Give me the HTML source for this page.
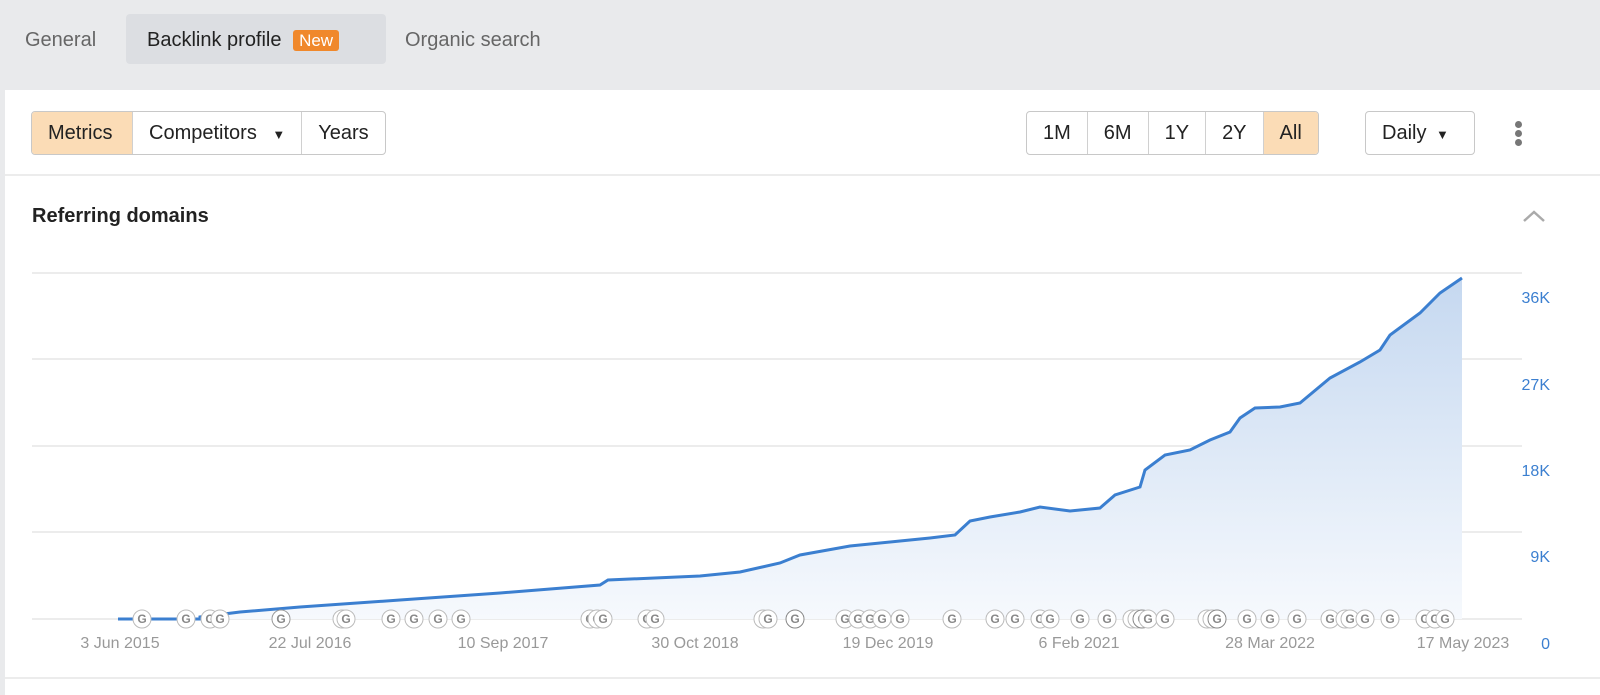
<!DOCTYPE html>
<html><head><style>
body{margin:0;width:1600px;height:695px;background:#e9eaec;font-family:"Liberation Sans",sans-serif;overflow:hidden;position:relative}
.tab{position:absolute;top:14px;height:50px;line-height:52px;font-size:20px;color:#666}
.card{position:absolute;left:5px;top:90px;width:1595px;height:605px;background:#fff}
.btn{position:absolute;top:111px;height:42px;border:1px solid #c8c8c8;border-radius:4px;display:flex;overflow:hidden;font-size:20px;color:#222}
.btn div{padding:0 16px;line-height:42px;border-left:1px solid #d0d0d0}
.btn div:first-child{border-left:none}
.on{background:#fbdcb6}
.yl{position:absolute;right:50px;font-size:16px;color:#3b7fd0}
.xl{position:absolute;top:635px;font-size:16px;color:#999;transform:translateX(-50%)}
</style></head><body>
<div class="tab" style="left:25px">General</div>
<div class="tab" style="left:126px;width:260px;background:#dcdee2;border-radius:4px;color:#222"><span style="margin-left:21px">Backlink profile</span> <span style="background:#f0882b;color:#fff;font-size:17px;padding:1px 6px;border-radius:3px;margin-left:6px">New</span></div>
<div class="tab" style="left:405px">Organic search</div>
<div class="card"></div>
<div class="btn" style="left:31px"><div class="on" style="width:68px">Metrics</div><div>Competitors <span style="font-size:13px;margin-left:10px">▼</span></div><div>Years</div></div>
<div class="btn" style="left:1026px"><div>1M</div><div>6M</div><div>1Y</div><div>2Y</div><div class="on">All</div></div>
<div class="btn" style="left:1365px;width:108px"><div>Daily <span style="font-size:13px;margin-left:4px">▼</span></div></div>
<div style="position:absolute;left:1515px;top:121px;width:7px"><div style="width:7px;height:7px;border-radius:50%;background:#777;margin-bottom:2px"></div><div style="width:7px;height:7px;border-radius:50%;background:#777;margin-bottom:2px"></div><div style="width:7px;height:7px;border-radius:50%;background:#777"></div></div>
<div style="position:absolute;left:5px;top:174px;width:1595px;height:2px;background:#ececec"></div>
<div style="position:absolute;left:32px;top:205px;font-size:20px;font-weight:bold;color:#222">Referring domains</div>
<svg style="position:absolute;left:1521px;top:208px" width="26" height="16"><path d="M3 13 L13 4 L23 13" stroke="#aaa" stroke-width="2.5" fill="none"/></svg>
<svg style="position:absolute;left:0;top:0" width="1600" height="695">
<defs><linearGradient id="g" x1="0" y1="0" x2="0" y2="1"><stop offset="0" stop-color="#c5d8f0"/><stop offset="1" stop-color="#f6f9fd"/></linearGradient></defs>
<g stroke="#e6e6e6" stroke-width="1.5"><line x1="32" y1="273" x2="1522" y2="273"/><line x1="32" y1="359" x2="1522" y2="359"/><line x1="32" y1="446" x2="1522" y2="446"/><line x1="32" y1="532" x2="1522" y2="532"/><line x1="32" y1="619" x2="1522" y2="619"/></g>
<path d="M200,617 L240,612 L300,607 L400,600 L500,593 L600,585 L608,580 L700,576 L740,572 L780,563 L800,555 L850,546 L900,541 L930,538 L955,535 L970,521 L990,517 L1020,512 L1040,507 L1070,511 L1100,508 L1115,495 L1140,487 L1145,470 L1165,455 L1190,450 L1210,440 L1230,432 L1240,418 L1255,408 L1280,407 L1300,403 L1330,378 L1360,362 L1380,350 L1390,335 L1420,313 L1440,293 L1462,278 L1462,619 L200,619Z" fill="url(#g)"/>
<path d="M118,619 L200,619 L200,617 L240,612 L300,607 L400,600 L500,593 L600,585 L608,580 L700,576 L740,572 L780,563 L800,555 L850,546 L900,541 L930,538 L955,535 L970,521 L990,517 L1020,512 L1040,507 L1070,511 L1100,508 L1115,495 L1140,487 L1145,470 L1165,455 L1190,450 L1210,440 L1230,432 L1240,418 L1255,408 L1280,407 L1300,403 L1330,378 L1360,362 L1380,350 L1390,335 L1420,313 L1440,293 L1462,278" fill="none" stroke="#3b7fd0" stroke-width="3"/>
<g font-family="Liberation Sans" font-size="12" font-weight="bold" fill="#888" text-anchor="middle">
<script>/*none*/</script>
</g>
<g id="gs" font-family="Liberation Sans" font-size="12" font-weight="bold" text-anchor="middle">
<g transform="translate(142,619)"><circle r="9" fill="#fff" stroke="#bbb"/><text y="4" fill="#888">G</text></g>
<g transform="translate(186,619)"><circle r="9" fill="#fff" stroke="#bbb"/><text y="4" fill="#888">G</text></g>
<g transform="translate(210,619)"><circle r="9" fill="#fff" stroke="#bbb"/><text y="4" fill="#888">G</text></g>
<g transform="translate(220,619)"><circle r="9" fill="#fff" stroke="#bbb"/><text y="4" fill="#888">G</text></g>
<g transform="translate(281,619)"><circle r="9" fill="#fff" stroke="#999"/><text y="4" fill="#888">G</text></g>
<g transform="translate(342,619)"><circle r="9" fill="#fff" stroke="#bbb"/><text y="4" fill="#888">G</text></g>
<g transform="translate(346,619)"><circle r="9" fill="#fff" stroke="#bbb"/><text y="4" fill="#888">G</text></g>
<g transform="translate(391,619)"><circle r="9" fill="#fff" stroke="#bbb"/><text y="4" fill="#888">G</text></g>
<g transform="translate(414,619)"><circle r="9" fill="#fff" stroke="#bbb"/><text y="4" fill="#888">G</text></g>
<g transform="translate(438,619)"><circle r="9" fill="#fff" stroke="#bbb"/><text y="4" fill="#888">G</text></g>
<g transform="translate(461,619)"><circle r="9" fill="#fff" stroke="#bbb"/><text y="4" fill="#888">G</text></g>
<g transform="translate(590,619)"><circle r="9" fill="#fff" stroke="#bbb"/><text y="4" fill="#888">G</text></g>
<g transform="translate(597,619)"><circle r="9" fill="#fff" stroke="#bbb"/><text y="4" fill="#888">G</text></g>
<g transform="translate(603,619)"><circle r="9" fill="#fff" stroke="#bbb"/><text y="4" fill="#888">G</text></g>
<g transform="translate(647,619)"><circle r="9" fill="#fff" stroke="#bbb"/><text y="4" fill="#888">G</text></g>
<g transform="translate(655,619)"><circle r="9" fill="#fff" stroke="#bbb"/><text y="4" fill="#888">G</text></g>
<g transform="translate(763,619)"><circle r="9" fill="#fff" stroke="#bbb"/><text y="4" fill="#888">G</text></g>
<g transform="translate(768,619)"><circle r="9" fill="#fff" stroke="#bbb"/><text y="4" fill="#888">G</text></g>
<g transform="translate(795,619)"><circle r="9" fill="#fff" stroke="#888"/><text y="4" fill="#888">G</text></g>
<g transform="translate(845,619)"><circle r="9" fill="#fff" stroke="#bbb"/><text y="4" fill="#888">G</text></g>
<g transform="translate(858,619)"><circle r="9" fill="#fff" stroke="#bbb"/><text y="4" fill="#888">G</text></g>
<g transform="translate(870,619)"><circle r="9" fill="#fff" stroke="#bbb"/><text y="4" fill="#888">G</text></g>
<g transform="translate(882,619)"><circle r="9" fill="#fff" stroke="#bbb"/><text y="4" fill="#888">G</text></g>
<g transform="translate(900,619)"><circle r="9" fill="#fff" stroke="#bbb"/><text y="4" fill="#888">G</text></g>
<g transform="translate(952,619)"><circle r="9" fill="#fff" stroke="#bbb"/><text y="4" fill="#888">G</text></g>
<g transform="translate(995,619)"><circle r="9" fill="#fff" stroke="#bbb"/><text y="4" fill="#888">G</text></g>
<g transform="translate(1015,619)"><circle r="9" fill="#fff" stroke="#bbb"/><text y="4" fill="#888">G</text></g>
<g transform="translate(1040,619)"><circle r="9" fill="#fff" stroke="#bbb"/><text y="4" fill="#888">G</text></g>
<g transform="translate(1050,619)"><circle r="9" fill="#fff" stroke="#bbb"/><text y="4" fill="#888">G</text></g>
<g transform="translate(1080,619)"><circle r="9" fill="#fff" stroke="#bbb"/><text y="4" fill="#888">G</text></g>
<g transform="translate(1107,619)"><circle r="9" fill="#fff" stroke="#bbb"/><text y="4" fill="#888">G</text></g>
<g transform="translate(1132,619)"><circle r="9" fill="#fff" stroke="#bbb"/><text y="4" fill="#888">G</text></g>
<g transform="translate(1137,619)"><circle r="9" fill="#fff" stroke="#bbb"/><text y="4" fill="#888">G</text></g>
<g transform="translate(1142,619)"><circle r="9" fill="#fff" stroke="#888"/><text y="4" fill="#888">G</text></g>
<g transform="translate(1148,619)"><circle r="9" fill="#fff" stroke="#bbb"/><text y="4" fill="#888">G</text></g>
<g transform="translate(1165,619)"><circle r="9" fill="#fff" stroke="#bbb"/><text y="4" fill="#888">G</text></g>
<g transform="translate(1207,619)"><circle r="9" fill="#fff" stroke="#bbb"/><text y="4" fill="#888">G</text></g>
<g transform="translate(1212,619)"><circle r="9" fill="#fff" stroke="#bbb"/><text y="4" fill="#888">G</text></g>
<g transform="translate(1217,619)"><circle r="9" fill="#fff" stroke="#888"/><text y="4" fill="#888">G</text></g>
<g transform="translate(1247,619)"><circle r="9" fill="#fff" stroke="#bbb"/><text y="4" fill="#888">G</text></g>
<g transform="translate(1270,619)"><circle r="9" fill="#fff" stroke="#bbb"/><text y="4" fill="#888">G</text></g>
<g transform="translate(1297,619)"><circle r="9" fill="#fff" stroke="#bbb"/><text y="4" fill="#888">G</text></g>
<g transform="translate(1330,619)"><circle r="9" fill="#fff" stroke="#bbb"/><text y="4" fill="#888">G</text></g>
<g transform="translate(1345,619)"><circle r="9" fill="#fff" stroke="#bbb"/><text y="4" fill="#888">G</text></g>
<g transform="translate(1350,619)"><circle r="9" fill="#fff" stroke="#bbb"/><text y="4" fill="#888">G</text></g>
<g transform="translate(1365,619)"><circle r="9" fill="#fff" stroke="#bbb"/><text y="4" fill="#888">G</text></g>
<g transform="translate(1390,619)"><circle r="9" fill="#fff" stroke="#bbb"/><text y="4" fill="#888">G</text></g>
<g transform="translate(1425,619)"><circle r="9" fill="#fff" stroke="#bbb"/><text y="4" fill="#888">G</text></g>
<g transform="translate(1435,619)"><circle r="9" fill="#fff" stroke="#bbb"/><text y="4" fill="#888">G</text></g>
<g transform="translate(1445,619)"><circle r="9" fill="#fff" stroke="#bbb"/><text y="4" fill="#888">G</text></g>
</g>
</svg>
<div class="yl" style="top:290px">36K</div>
<div class="yl" style="top:377px">27K</div>
<div class="yl" style="top:463px">18K</div>
<div class="yl" style="top:549px">9K</div>
<div class="yl" style="top:636px;right:50px">0</div>
<div class="xl" style="left:120px">3 Jun 2015</div>
<div class="xl" style="left:310px">22 Jul 2016</div>
<div class="xl" style="left:503px">10 Sep 2017</div>
<div class="xl" style="left:695px">30 Oct 2018</div>
<div class="xl" style="left:888px">19 Dec 2019</div>
<div class="xl" style="left:1079px">6 Feb 2021</div>
<div class="xl" style="left:1270px">28 Mar 2022</div>
<div class="xl" style="left:1463px">17 May 2023</div>
<div style="position:absolute;left:5px;top:677px;width:1595px;height:2px;background:#ececec"></div>
</body></html>
